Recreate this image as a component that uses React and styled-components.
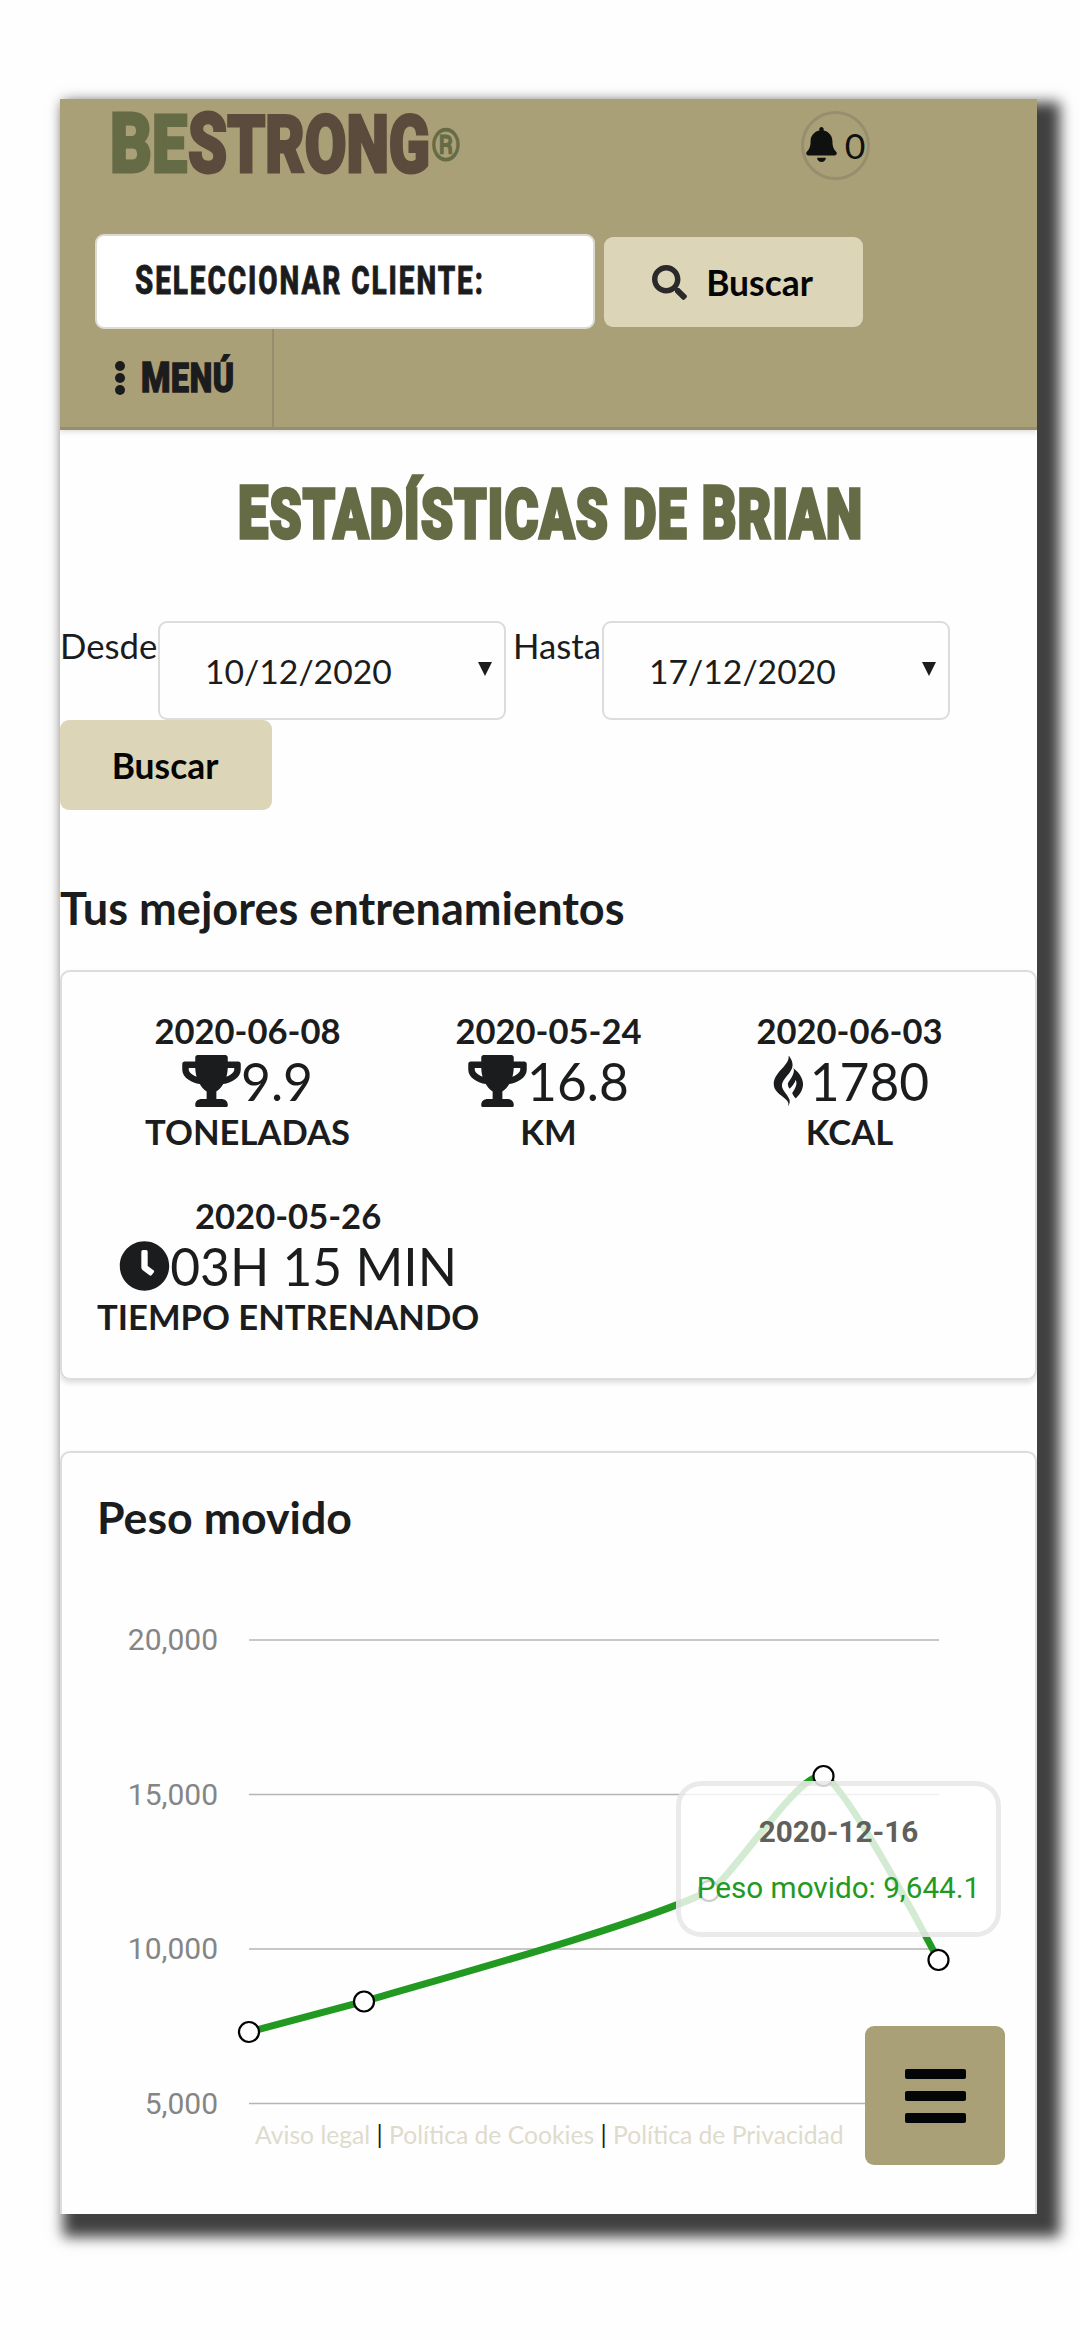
import React from "react";
import styled, { createGlobalStyle } from "styled-components";
import {
  FaBell,
  FaClock,
  FaGripfire,
  FaSearch,
  FaTrophy,
} from "react-icons/fa";

const GlobalStyle = createGlobalStyle`
  *,
  *::before,
  *::after {
    box-sizing: border-box;
  }

  body {
    margin: 0;
    background: #fefefe;
    color: #1b1c1d;
    font-family: Lato, "Open Sans", sans-serif;
    font-size: 34px;
  }
`;

const Page = styled.div`
  height: 2340px;
  padding: 99px 43px 126px 60px;
  overflow: hidden;
`;

const Screen = styled.main`
  position: relative;
  height: 2115px;
  background: #fefefe;
  box-shadow: 13px 13px 13px 10px rgba(0, 0, 0, 0.75);
`;

const Content = styled.div`
  height: 100%;
  display: flex;
  flex-direction: column;
  overflow: hidden;
`;

const Header = styled.header`
  flex: none;
  height: 331px;
  background: #aaa078;
  border-bottom: 3px solid #988d6c;
  box-shadow: 0 2px 5px rgba(34, 36, 38, 0.15);
`;

const TopBar = styled.div`
  display: flex;
  align-items: flex-start;
  height: 134px;
  padding: 0 167px 0 50px;
  justify-content: space-between;
`;

const LogoMark = styled.svg`
  overflow: visible;
  font-family: Roboto, sans-serif;
  font-weight: 900;
  font-size: 80px;
  stroke-width: 3px;
`;

const Alerts = styled.div`
  display: flex;
  align-items: center;
  justify-content: center;
  gap: 8px;
  width: 69px;
  height: 69px;
  margin-top: 12px;
  border: 3px solid #988e6d;
  border-radius: 50%;
  color: #0f1110;
  font-size: 35.6px;

  svg {
    flex: none;
    width: 31px;
    height: 35px;
    margin-top: -2px;
  }
`;

const SearchBar = styled.div`
  display: flex;
  align-items: center;
  gap: 9px;
  height: 96px;
  padding-left: 35px;

  button {
    margin-top: 2px;
  }
`;

const ClientField = styled.div`
  display: flex;
  align-items: center;
  width: 500px;
  height: 95px;
  padding: 0 38px;
  background: #fff;
  border: 2px solid #dcdad2;
  border-radius: 9px;
`;

// Condensed display lettering, squeezed horizontally by $scale
const Display = styled.span`
  display: inline-block;
  font-family: Roboto, sans-serif;
  font-weight: ${(p) => p.$weight || 900};
  font-size: ${(p) => p.$size}px;
  line-height: 1;
  letter-spacing: ${(p) => p.$spacing || 0}px;
  text-transform: uppercase;
  white-space: nowrap;
  transform: scaleX(${(p) => p.$scale});
  transform-origin: ${(p) => p.$origin || "left"} center;
  -webkit-text-stroke: ${(p) => p.$stroke || 0}px currentColor;
`;

const Initial = styled.span`
  font-size: 1.05em;
`;

const Button = styled.button`
  display: flex;
  align-items: center;
  justify-content: center;
  gap: 19px;
  width: ${(p) => p.$width}px;
  height: 90px;
  padding: 0 2px 0 0;
  border: none;
  border-radius: 9px;
  background: #dcd5b8;
  color: #050505;
  font-family: inherit;
  font-size: 35.4px;
  font-weight: 700;

  svg {
    width: 35px;
    height: 35px;
    color: #2a2a2a;
  }
`;

const MenuBar = styled.nav`
  height: 98px;
`;

const MenuItem = styled.div`
  display: flex;
  align-items: center;
  gap: 16px;
  width: 214px;
  height: 100%;
  padding-left: 55px;
  border-right: 2px solid #988e6d;
`;

const Title = styled.h1`
  display: flex;
  flex: none;
  justify-content: center;
  margin: 48px 0 0 4px;
  height: 143px;
  color: #656b45;
`;

const FilterForm = styled.form`
  display: flex;
  flex: none;
  flex-wrap: wrap;
  align-items: flex-start;
  font-size: 34.7px;
`;

const FilterLabel = styled.label`
  width: ${(p) => p.$width}px;
  margin-left: ${(p) => p.$gap || 0}px;
  line-height: 49px;
  white-space: nowrap;
`;

const DateSelect = styled.div`
  display: flex;
  align-items: center;
  justify-content: space-between;
  width: 348px;
  height: 99px;
  padding: 0 12px 0 45px;
  border: 2px solid #dcdcdc;
  border-radius: 9px;
  font-size: 33.7px;
`;

const Arrow = styled.span`
  border: 7px solid transparent;
  border-top: 14px solid #1b1c1d;
  border-bottom: none;
  margin-top: -3px;
`;

const SectionTitle = styled.h3`
  flex: none;
  margin: 0;
  padding: ${(p) => p.$padding || 0};
  font-size: ${(p) => p.$size}px;
  line-height: 52px;
  font-weight: 700;
`;

const Card = styled.section`
  flex: none;
  height: ${(p) => p.$height}px;
  border: 2px solid #dcdcdc;
  border-radius: 10px;
  box-shadow: 0 3px 5px rgba(34, 36, 38, 0.15);
`;

const Stats = styled(Card)`
  display: flex;
  flex-wrap: wrap;
  align-content: flex-start;
  row-gap: 44px;
  margin: 36px 0 71px;
  padding: 39px 34px 0 35px;
`;

const Stat = styled.div`
  display: flex;
  flex-direction: column;
  align-items: center;
  min-width: 301px;
  height: 141px;
  font-size: 34.6px;
  font-weight: 700;
  line-height: 40px;
  text-transform: uppercase;
`;

const StatValue = styled.div`
  display: flex;
  align-items: center;
  height: 61px;
  font-size: 51.5px;
  font-weight: 400;

  svg {
    flex: none;
    width: ${(p) => p.$iconWidth}px;
    height: 52px;
  }
`;

const StatLabel = styled.div`
  line-height: 41px;
`;

const Chart = styled.svg`
  display: block;
  font-family: Roboto, sans-serif;
  font-size: 30px;
`;

const Tooltip = styled.div`
  position: absolute;
  top: 1682px;
  left: 616px;
  width: 325px;
  height: 156px;
  padding-top: 28px;
  border: 5px solid rgba(232, 232, 232, 0.9);
  border-radius: 25px;
  background: rgba(255, 255, 255, 0.8);
  background-clip: padding-box;
  font-family: Roboto, sans-serif;
  font-size: 29.7px;
  line-height: 36px;
  text-align: center;
  white-space: nowrap;
`;

const TooltipDate = styled.div`
  margin-bottom: 20px;
  color: #605f5b;
  font-weight: 700;
`;

const TooltipValue = styled.div`
  color: #229a22;
`;

const Legal = styled.footer`
  position: absolute;
  top: 2021px;
  left: 195px;
  font-size: 24.7px;
  line-height: 30px;
  white-space: nowrap;
`;

const LegalLink = styled.a`
  color: #dedbcc;
`;

const FloatingMenu = styled.button`
  position: absolute;
  top: 1927px;
  left: 805px;
  display: flex;
  flex-direction: column;
  align-items: center;
  justify-content: center;
  gap: 12px;
  width: 140px;
  height: 139px;
  padding: 0;
  border: none;
  border-radius: 9px;
  background: #aaa078;
`;

const Bar = styled.span`
  width: 61px;
  height: 10px;
  border-radius: 2px;
  background: #040505;
`;

const stats = [
  { date: "2020-06-08", icon: FaTrophy, iconWidth: 59, value: "9.9", label: "Toneladas" },
  { date: "2020-05-24", icon: FaTrophy, iconWidth: 59, value: "16.8", label: "Km" },
  { date: "2020-06-03", icon: FaGripfire, iconWidth: 40, value: "1780", label: "Kcal" },
  {
    date: "2020-05-26",
    icon: FaClock,
    iconWidth: 51,
    value: "03h 15 min",
    label: "Tiempo entrenando",
  },
];

const ticks = [
  { label: "20,000", y: 79 },
  { label: "15,000", y: 233.5 },
  { label: "10,000", y: 388 },
  { label: "5,000", y: 542.5 },
];

const points = [
  [187, 471],
  [302, 440.5],
  [647, 330],
  [761.5, 215],
  [876.5, 399],
];

function Logo() {
  return (
    <LogoMark width="360" height="100" viewBox="0 0 360 100">
      <text
        x="0"
        y="73"
        fill="#656b45"
        stroke="#656b45"
        textLength="77"
        lengthAdjust="spacingAndGlyphs"
      >
        <tspan fontSize="83">B</tspan>E
      </text>
      <text
        x="78"
        y="73"
        fill="#5b4b3d"
        stroke="#5b4b3d"
        textLength="242"
        lengthAdjust="spacingAndGlyphs"
      >
        <tspan fontSize="83">S</tspan>TRONG
      </text>
      <text
        x="321"
        y="62"
        fontSize="45"
        fill="#656b45"
        stroke="#656b45"
        strokeWidth="1"
        textLength="30"
        lengthAdjust="spacingAndGlyphs"
      >
        ®
      </text>
    </LogoMark>
  );
}

function WeightChart() {
  return (
    <Chart width="973" height="700" viewBox="0 0 973 700">
      {ticks.map((tick) => (
        <g key={tick.label}>
          <text x="156" y={tick.y + 10} textAnchor="end" fill="#858585">
            {tick.label}
          </text>
          <line x1="187" x2="877" y1={tick.y} y2={tick.y} stroke="#b5b5b5" strokeWidth="1.7" />
        </g>
      ))}
      <path
        d="M187 471 L302 440.5 C371 420 578 364 647 330 C670 318 738 208 761.5 215 C784 222 876.5 399 876.5 399"
        fill="none"
        stroke="#229a22"
        strokeWidth="7"
      />
      {points.map(([x, y]) => (
        <circle key={x} cx={x} cy={y} r="10" fill="#fff" stroke="#000" strokeWidth="2.2" />
      ))}
    </Chart>
  );
}

export default function App() {
  return (
    <Page>
      <GlobalStyle />
      <Screen>
        <Content>
          <Header>
            <TopBar>
              <Logo />
              <Alerts>
                <FaBell />0
              </Alerts>
            </TopBar>
            <SearchBar>
              <ClientField>
                <Display $size={38} $weight={800} $scale={0.737} $spacing={2.6} $stroke={0.8}>
                  <Initial>S</Initial>eleccionar cliente:
                </Display>
              </ClientField>
              <Button $width={259}>
                <FaSearch />
                Buscar
              </Button>
            </SearchBar>
            <MenuBar>
              <MenuItem>
                <svg width="10" height="34" viewBox="0 0 10 34" fill="#1b1c1d">
                  <circle cx="5" cy="5" r="5" />
                  <circle cx="5" cy="17" r="5" />
                  <circle cx="5" cy="29" r="5" />
                </svg>
                <Display $size={40} $scale={0.8} $spacing={0.8} $stroke={1.4}>
                  <Initial>M</Initial>enú
                </Display>
              </MenuItem>
            </MenuBar>
          </Header>
          <Title>
            <Display $size={68} $scale={0.752} $spacing={1.8} $origin="center" $stroke={3.4}>
              <Initial>E</Initial>stadísticas de <Initial>B</Initial>rian
            </Display>
          </Title>
          <FilterForm>
            <FilterLabel $width={98}>Desde</FilterLabel>
            <DateSelect>
              10/12/2020
              <Arrow />
            </DateSelect>
            <FilterLabel $width={89} $gap={7}>
              Hasta
            </FilterLabel>
            <DateSelect>
              17/12/2020
              <Arrow />
            </DateSelect>
            <Button type="button" $width={212}>
              Buscar
            </Button>
          </FilterForm>
          <SectionTitle $size={45.1} $padding="72px 0 0">
            Tus mejores entrenamientos
          </SectionTitle>
          <Stats $height={410}>
            {stats.map(({ date, icon: Icon, iconWidth, value, label }) => (
              <Stat key={date}>
                {date}
                <StatValue $iconWidth={iconWidth}>
                  <Icon />
                  {value}
                </StatValue>
                <StatLabel>{label}</StatLabel>
              </Stat>
            ))}
          </Stats>
          <Card $height={860}>
            <SectionTitle $size={44.7} $padding="38px 35px 18px">
              Peso movido
            </SectionTitle>
            <WeightChart />
          </Card>
        </Content>
        <Tooltip>
          <TooltipDate>2020-12-16</TooltipDate>
          <TooltipValue>Peso movido: 9,644.1</TooltipValue>
        </Tooltip>
        <Legal>
          <LegalLink>Aviso legal</LegalLink> | <LegalLink>Política de Cookies</LegalLink> |{" "}
          <LegalLink>Política de Privacidad</LegalLink>
        </Legal>
        <FloatingMenu aria-label="Menú">
          <Bar />
          <Bar />
          <Bar />
        </FloatingMenu>
      </Screen>
    </Page>
  );
}
